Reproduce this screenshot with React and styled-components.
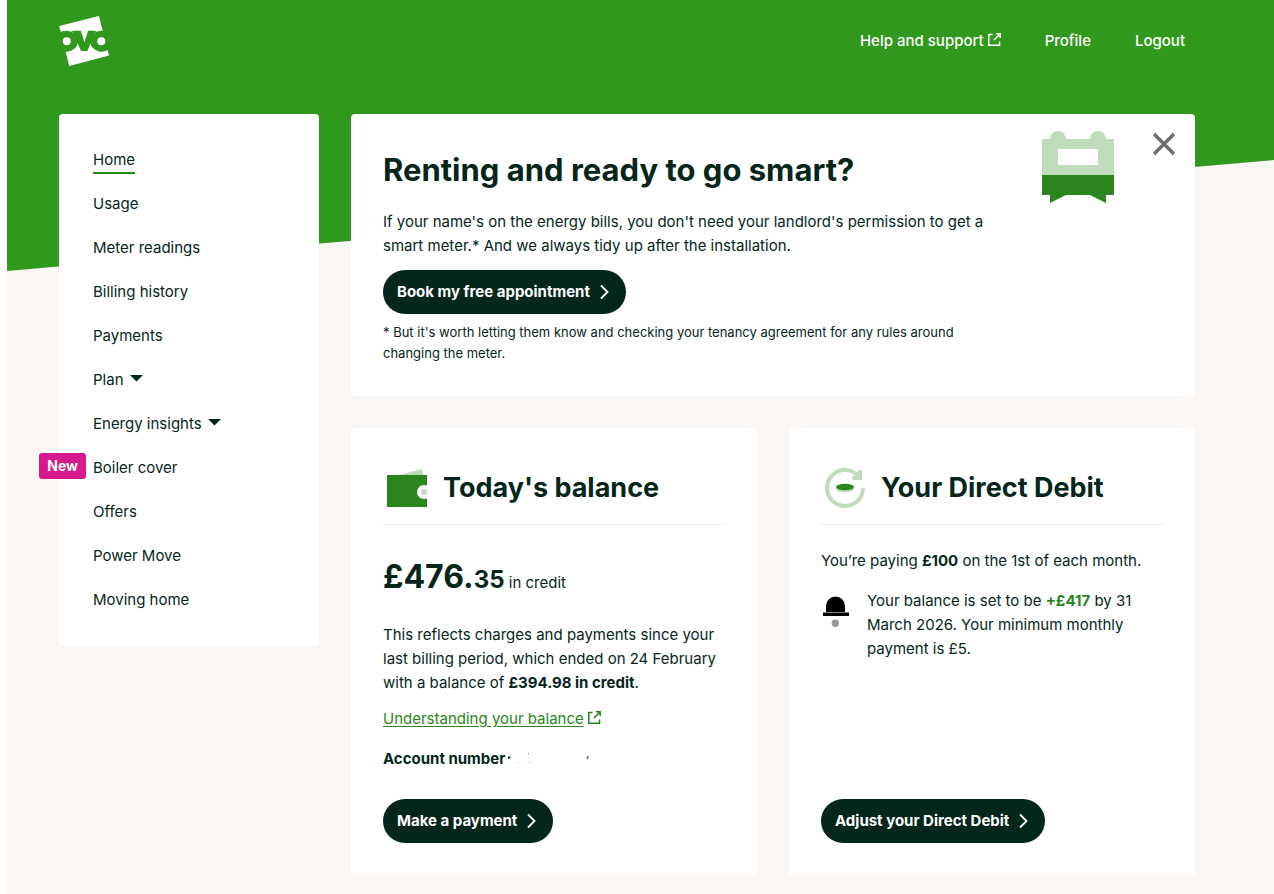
import React from "react";
import styled, { createGlobalStyle } from "styled-components";

const color = {
  brand: "#30991d",
  leaf: "#2a851c",
  mint: "#c1dbbd",
  ink: "#05261b",
  sand: "#f9f6f3",
  rule: "#e6e6e6",
  pink: "#d6198c",
};

const GlobalStyle = createGlobalStyle`
  *, *::before, *::after { box-sizing: border-box; }
  body {
    margin: 0;
    background: #fff;
    color: ${color.ink};
    font-family: Inter, "Liberation Sans", sans-serif;
    font-size: 15px;
    line-height: 24px;
  }
  h1, h2, p, ul { margin: 0; padding: 0; }
  svg { display: block; flex: none; }
`;

const Page = styled.div`
  position: relative;
  min-height: 100vh;
  margin-left: 7px;
  padding: 0 79px 19px 52px;
  background: ${color.sand};
`;

const Slope = styled.div`
  position: absolute;
  inset: 0 0 auto 0;
  height: 271px;
  background: ${color.brand};
  clip-path: polygon(0 0, 100% 0, 100% 160px, 0 100%);
`;

const Header = styled.header`
  position: relative;
  display: flex;
  align-items: center;
  justify-content: space-between;
  height: 82px;
  padding-right: 10px;
`;

const TopNav = styled.nav`
  display: flex;
  gap: 44px;
`;

const TopLink = styled.a`
  display: flex;
  align-items: center;
  gap: 4px;
  color: #fff;
  font-weight: 500;
  text-decoration: none;
`;

const Columns = styled.div`
  position: relative;
  display: grid;
  grid-template-columns: 260px minmax(0, 1fr);
  align-items: start;
  gap: 32px;
  margin-top: 32px;
`;

const Panel = styled.section`
  background: #fff;
  border-radius: 4px;
`;

const SideNav = styled.nav`
  padding: 24px 34px;
  background: #fff;
  border-radius: 4px;
`;

const SideList = styled.ul`
  list-style: none;
`;

const SideItem = styled.li`
  position: relative;
  display: flex;
  align-items: center;
  height: 44px;
`;

const SideLink = styled.a`
  display: flex;
  align-items: center;
  gap: 6px;
  color: inherit;
  text-decoration: none;
  box-shadow: ${(p) => (p.$current ? `0 2px 0 ${color.leaf}` : "none")};
`;

const Badge = styled.span`
  position: absolute;
  top: 7px;
  right: calc(100% + 7px);
  padding: 0 8px;
  border-radius: 3px;
  background: ${color.pink};
  color: #fff;
  font-size: 14px;
  font-weight: 700;
  line-height: 26px;
`;

const Main = styled.main`
  display: grid;
  gap: 32px;
`;

const Banner = styled(Panel)`
  display: flex;
  align-items: flex-start;
  padding-right: 19px;
`;

const BannerText = styled.div`
  flex: 1;
  padding: 32px;
`;

const BannerTitle = styled.h1`
  margin-bottom: 16px;
  font-size: 31px;
  font-weight: 700;
  line-height: 48px;
`;

const BannerCopy = styled.p`
  max-width: 612px;
  margin-bottom: 12px;
`;

const SmallPrint = styled.p`
  max-width: 600px;
  margin-top: 8px;
  font-size: 13px;
  line-height: 21px;
`;

const BannerArt = styled.div`
  padding: 17px 38px 0 0;
`;

const CloseButton = styled.button`
  margin-top: 18px;
  padding: 0;
  border: 0;
  background: none;
  cursor: pointer;
`;

const PillButton = styled.button`
  display: inline-flex;
  align-items: center;
  align-self: flex-start;
  gap: 6px;
  height: 44px;
  padding: 0 14px;
  border: 0;
  border-radius: 22px;
  background: ${color.ink};
  color: #fff;
  font: inherit;
  font-weight: 700;
  cursor: pointer;
`;

const Cards = styled.div`
  display: grid;
  grid-template-columns: repeat(2, minmax(0, 1fr));
  gap: 32px;
`;

const Card = styled(Panel)`
  display: flex;
  flex-direction: column;
  padding: 32px;
`;

const CardHead = styled.header`
  display: flex;
  align-items: center;
  gap: 12px;
  height: 65px;
  padding-bottom: 8px;
  border-bottom: 1px solid ${color.rule};
`;

const CardTitle = styled.h2`
  font-size: 27px;
  font-weight: 700;
  line-height: 40px;
`;

const Amount = styled.p`
  margin: 28px 0 16px;
  line-height: 48px;
`;

const Pounds = styled.strong`
  font-size: 32px;
`;

const Pence = styled.strong`
  font-size: 24px;
`;

const ExternalLink = styled.a`
  display: flex;
  align-items: center;
  align-self: flex-start;
  gap: 4px;
  margin: 12px 0 16px;
  color: ${color.leaf};
  text-underline-offset: 2px;
`;

const Account = styled.p`
  display: flex;
  margin-bottom: 28px;
  font-weight: 700;
`;

const DebitCopy = styled.p`
  margin: 24px 0 16px;
`;

const Notice = styled.div`
  display: flex;
  gap: 16px;
  margin-bottom: auto;
`;

const Gain = styled.strong`
  color: ${color.leaf};
`;

const Logo = () => (
  <svg width="50" height="50" viewBox="0 0 50 50" role="img" aria-label="OVO">
    <path fill="#fff" d="M0.2 10 39.9 0 50 39.4 10.2 50Z" />
    <g fill={color.brand}>
      <ellipse cx="7.8" cy="25.2" rx="11" ry="10.5" />
      <ellipse cx="42.3" cy="25.2" rx="11" ry="10.5" />
      <path d="M0 16 7.8 14.7V35.6H0ZM42.3 14.7H50V34L42.3 35.6Z" />
      <path d="M13 14.8H22L25.3 26.2 29.2 14.8H37L28.4 35H22Z" />
    </g>
    <g fill="#fff">
      <circle cx="7.8" cy="25.3" r="4" />
      <circle cx="42.3" cy="25.3" r="4" />
    </g>
  </svg>
);

const External = () => (
  <svg width="13" height="16" viewBox="0 0 13 16" fill="none" stroke="currentColor" strokeWidth="1.5" aria-hidden="true">
    <path d="M4.5 1.5H0.8V12.2H11.5V8.5M6 7 12 1M8 0.8H12.2V5" />
  </svg>
);

const Caret = () => (
  <svg width="13" height="10" viewBox="0 0 13 10" fill={color.ink} aria-hidden="true">
    <path d="M0 0H13L6.5 6.5Z" />
  </svg>
);

const Chevron = () => (
  <svg width="16" height="16" viewBox="0 0 16 16" fill="none" stroke="#fff" strokeWidth="1.8" aria-hidden="true">
    <path d="M5 1.5 11.5 8 5 14.5" />
  </svg>
);

const Meter = () => (
  <svg width="72" height="72" viewBox="0 0 72 72" aria-hidden="true">
    <g fill={color.mint}>
      <circle cx="16" cy="8" r="8" />
      <circle cx="56" cy="8" r="8" />
      <path d="M0 8H72V44H0Z" />
    </g>
    <path fill="#fff" d="M16 18H56V34H16Z" />
    <path fill={color.leaf} d="M0 44H72V64H64V72L48 64H24L8 72V64H0Z" />
  </svg>
);

const Cross = () => (
  <svg width="24" height="24" viewBox="0 0 24 24" stroke="#6e6e6e" strokeWidth="3.4" aria-hidden="true">
    <path d="M2 2 22 22M22 2 2 22" />
  </svg>
);

const Wallet = () => (
  <svg width="48" height="48" viewBox="0 0 48 48" aria-hidden="true">
    <path fill={color.mint} d="M16 11 38.7 5 40.8 11Z" />
    <path fill={color.leaf} d="M4 11H44V43H4Z" />
    <circle cx="41" cy="28" r="7" fill="#fff" />
    <circle cx="41" cy="28" r="3" fill={color.mint} />
  </svg>
);

const Cycle = () => (
  <svg width="48" height="48" viewBox="0 0 48 48" aria-hidden="true">
    <path fill="none" stroke={color.mint} strokeWidth="4" d="M42 24A18 18 0 1 1 37.5 12.1M39 6V14H31.3" />
    <ellipse cx="24" cy="25" rx="9" ry="3.4" fill={color.mint} />
    <ellipse cx="24" cy="23" rx="9" ry="3.2" fill={color.leaf} />
  </svg>
);

const Bell = () => (
  <svg width="30" height="40" viewBox="0 0 30 40" aria-hidden="true">
    <path d="M5 23V17A9.5 9.5 0 0 1 24 17V23Z" />
    <path d="M2 23.5H28V27H2Z" />
    <circle cx="14.3" cy="34.3" r="3.7" fill="#999" />
  </svg>
);

const Redacted = () => (
  <svg width="84" height="24" viewBox="0 0 84 24" aria-hidden="true">
    <path fill={color.ink} d="M3 9.5H5.5V10.5L4 12H3Z" />
    <path fill="#ddd" d="M12 15H14V16H12ZM22 15H27V16H24Z" />
    <path fill="#777" d="M23 6H24V7H23Z" />
    <path fill="#22556b" d="M82.5 9H84L82.5 12H81.5Z" />
  </svg>
);

const menu = [
  { label: "Home", current: true },
  { label: "Usage" },
  { label: "Meter readings" },
  { label: "Billing history" },
  { label: "Payments" },
  { label: "Plan", expands: true },
  { label: "Energy insights", expands: true },
  { label: "Boiler cover", badge: "New" },
  { label: "Offers" },
  { label: "Power Move" },
  { label: "Moving home" },
];

export default function App() {
  return (
    <>
      <GlobalStyle />
      <Page>
        <Slope />
        <Header>
          <Logo />
          <TopNav aria-label="Account">
            <TopLink href="#help">Help and support<External /></TopLink>
            <TopLink href="#profile">Profile</TopLink>
            <TopLink href="#logout">Logout</TopLink>
          </TopNav>
        </Header>
        <Columns>
          <SideNav aria-label="Main">
            <SideList>
              {menu.map((item) => (
                <SideItem key={item.label}>
                  {item.badge && <Badge>{item.badge}</Badge>}
                  <SideLink href="#menu" $current={item.current} aria-current={item.current ? "page" : undefined}>
                    {item.label}
                    {item.expands && <Caret />}
                  </SideLink>
                </SideItem>
              ))}
            </SideList>
          </SideNav>
          <Main>
            <Banner>
              <BannerText>
                <BannerTitle>Renting and ready to go smart?</BannerTitle>
                <BannerCopy>
                  If your name's on the energy bills, you don't need your landlord's permission to get a smart
                  meter.* And we always tidy up after the installation.
                </BannerCopy>
                <PillButton type="button">Book my free appointment<Chevron /></PillButton>
                <SmallPrint>
                  * But it's worth letting them know and checking your tenancy agreement for any rules around
                  changing the meter.
                </SmallPrint>
              </BannerText>
              <BannerArt><Meter /></BannerArt>
              <CloseButton type="button" aria-label="Close"><Cross /></CloseButton>
            </Banner>
            <Cards>
              <Card>
                <CardHead>
                  <Wallet />
                  <CardTitle>Today's balance</CardTitle>
                </CardHead>
                <Amount><Pounds>£476.</Pounds><Pence>35</Pence> in credit</Amount>
                <p>
                  This reflects charges and payments since your last billing period, which ended on 24 February
                  with a balance of <strong>£394.98 in credit</strong>.
                </p>
                <ExternalLink href="#balance">Understanding your balance<External /></ExternalLink>
                <Account>Account number<Redacted /></Account>
                <PillButton type="button">Make a payment<Chevron /></PillButton>
              </Card>
              <Card>
                <CardHead>
                  <Cycle />
                  <CardTitle>Your Direct Debit</CardTitle>
                </CardHead>
                <DebitCopy>You’re paying <strong>£100</strong> on the 1st of each month.</DebitCopy>
                <Notice>
                  <Bell />
                  <p>
                    Your balance is set to be <Gain>+£417</Gain> by 31 March 2026. Your minimum monthly payment
                    is £5.
                  </p>
                </Notice>
                <PillButton type="button">Adjust your Direct Debit<Chevron /></PillButton>
              </Card>
            </Cards>
          </Main>
        </Columns>
      </Page>
    </>
  );
}
